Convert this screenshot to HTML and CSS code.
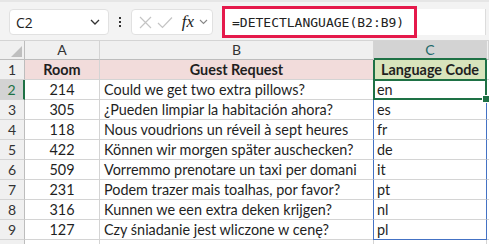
FILE: index.html
```html
<!DOCTYPE html>
<html lang="en">
<head>
  <meta charset="UTF-8">
  <meta name="viewport" content="width=device-width, initial-scale=1">
  <title>DETECTLANGUAGE</title>
  <link rel="stylesheet" href="styles.css">
</head>
<body>
<div class="topbar">
  <div class="namebox">
    <span>C2</span>
    <svg width="10" height="6" viewBox="0 0 10 6"><path d="M1 1 L5 5 L9 1" fill="none" stroke="#333" stroke-width="1.3"/></svg>
  </div>
  <div class="kebab"><i></i><i></i><i></i></div>
  <div class="fxbox">
    <svg width="13" height="13" viewBox="0 0 13 13"><path d="M1 1 L12 12 M12 1 L1 12" stroke="#c4c4c4" stroke-width="1.2"/></svg>
    <svg width="16" height="13" viewBox="0 0 16 13"><path d="M1 7 L5.5 11.5 L15 1.5" fill="none" stroke="#c4c4c4" stroke-width="1.2"/></svg>
    <span class="fx">fx</span>
    <svg width="9" height="6" viewBox="0 0 9 6"><path d="M1 1 L4.5 4.5 L8 1" fill="none" stroke="#888" stroke-width="1.1"/></svg>
  </div>
  <div class="formula">
    <span class="formula-text">=DETECTLANGUAGE(B2:B9)</span>
    <div class="callout"></div>
  </div>
</div>

<div class="sheet">
  <div class="row col-heads">
    <div class="rh corner"><svg width="11" height="11" viewBox="0 0 11 11"><path d="M11 0 L11 11 L0 11 Z" fill="#bfbfbf"/></svg></div>
    <div class="ch">A</div>
    <div class="ch">B</div>
    <div class="ch sel">C</div>
    <div class="ch"></div>
  </div>

  <div class="row">
    <div class="rh">1</div>
    <div class="cell head-pink num">Room</div>
    <div class="cell head-pink num">Guest Request</div>
    <div class="cell head-green num">Language Code</div>
    <div class="cell"></div>
  </div>
  <div class="row">
    <div class="rh active">2</div>
    <div class="cell num">214</div>
    <div class="cell">Could we get two extra pillows?</div>
    <div class="cell code current">en</div>
    <div class="cell"></div>
  </div>
  <div class="row">
    <div class="rh">3</div>
    <div class="cell num">305</div>
    <div class="cell">¿Pueden limpiar la habitación ahora?</div>
    <div class="cell code">es</div>
    <div class="cell"></div>
  </div>
  <div class="row">
    <div class="rh">4</div>
    <div class="cell num">118</div>
    <div class="cell">Nous voudrions un réveil à sept heures</div>
    <div class="cell code">fr</div>
    <div class="cell"></div>
  </div>
  <div class="row">
    <div class="rh">5</div>
    <div class="cell num">422</div>
    <div class="cell">Können wir morgen später auschecken?</div>
    <div class="cell code">de</div>
    <div class="cell"></div>
  </div>
  <div class="row">
    <div class="rh">6</div>
    <div class="cell num">509</div>
    <div class="cell">Vorremmo prenotare un taxi per domani</div>
    <div class="cell code">it</div>
    <div class="cell"></div>
  </div>
  <div class="row">
    <div class="rh">7</div>
    <div class="cell num">231</div>
    <div class="cell">Podem trazer mais toalhas, por favor?</div>
    <div class="cell code">pt</div>
    <div class="cell"></div>
  </div>
  <div class="row">
    <div class="rh">8</div>
    <div class="cell num">316</div>
    <div class="cell">Kunnen we een extra deken krijgen?</div>
    <div class="cell code">nl</div>
    <div class="cell"></div>
  </div>
  <div class="row">
    <div class="rh">9</div>
    <div class="cell num">127</div>
    <div class="cell">Czy śniadanie jest wliczone w cenę?</div>
    <div class="cell code last">pl</div>
    <div class="cell"></div>
  </div>
  <div class="row">
    <div class="rh"></div>
    <div class="cell"></div>
    <div class="cell"></div>
    <div class="cell"></div>
    <div class="cell"></div>
  </div>
</div>
</body>
</html>
```

FILE: styles.css
```css
html, body {
  margin: 0;
  padding: 0;
  overflow: hidden;
  background: #ffffff;
  font-family: Lato, "Liberation Sans", sans-serif;
  color: #1f1f1f;
}

/* Formula bar strip */
.topbar {
  height: 41px;
  box-sizing: border-box;
  padding: 9px 3px 0 9px;
  display: flex;
  align-items: flex-start;
  background: #f3f3f3;
  border-top: 2px solid #e6e6e6;
  border-bottom: 1px solid #d4d4d4;
}

.namebox {
  width: 100px;
  height: 26px;
  box-sizing: border-box;
  margin-top: -2px;
  padding: 0 8px 0 6px;
  display: flex;
  align-items: center;
  justify-content: space-between;
  background: #fff;
  border: 1px solid #e1e1e1;
  border-radius: 4px;
  font-family: "Open Sans", sans-serif;
  font-size: 14px;
  color: #222;
}

.kebab {
  width: 22px;
  height: 26px;
  margin-top: -2px;
  display: flex;
  flex-direction: column;
  align-items: center;
  justify-content: center;
  gap: 2px;
}

.kebab i {
  width: 2px;
  height: 2px;
  background: #333;
}

.fxbox {
  width: 82px;
  height: 26px;
  box-sizing: border-box;
  margin-top: -2px;
  margin-right: 9px;
  padding: 0 4px 0 7px;
  display: flex;
  align-items: center;
  justify-content: space-between;
  background: #fff;
  border: 1px solid #e1e1e1;
  border-radius: 4px;
}

.fx {
  font-family: "Liberation Serif", serif;
  font-style: italic;
  font-size: 17px;
  color: #222;
  margin-left: 4px;
}

.formula {
  flex: 1;
  height: 26px;
  box-sizing: border-box;
  margin-top: -2px;
  padding-left: 10px;
  position: relative;
  display: flex;
  align-items: center;
  background: #fff;
  border-right: 1px solid #dcdcdc;
}

.formula-text {
  font-family: "DejaVu Sans Mono", monospace;
  font-size: 13px;
  color: #222;
}

/* red annotation drawn over the formula bar */
.callout {
  position: absolute;
  left: 0;
  top: -3px;
  width: 195px;
  height: 32px;
  box-sizing: border-box;
  border: 3px solid #e5194b;
}

/* Grid */
.row {
  display: grid;
  grid-template-columns: 25px 75px 274px 113px 1fr;
  height: 20px;
}

.row > div {
  box-sizing: border-box;
  border-right: 1px solid #d4d4d4;
  border-bottom: 1px solid #d4d4d4;
  white-space: nowrap;
  overflow: visible;
}

.col-heads {
  height: 19px;
  background: #f0f0f0;
}

.col-heads > div {
  border-bottom-color: #bdbdbd;
  font-size: 14px;
  color: #333;
  text-align: center;
  line-height: 18px;
}

.col-heads .corner {
  display: flex;
  align-items: flex-end;
  justify-content: flex-end;
  padding: 0 2px 2px 0;
}

.col-heads .sel {
  background: #d3d3d3;
  color: #1d6a6a;
  border-bottom: 2px solid #1e7145;
  line-height: 17px;
}

.rh {
  background: #f0f0f0;
  text-align: center;
  font-size: 14px;
  line-height: 19px;
  color: #333;
}

.row > .rh {
  border-right-color: #bdbdbd;
}

.row > .rh.active {
  background: #d3d3d3;
  color: #1e7145;
  border-right: 2px solid #1e7145;
}

.cell {
  font-size: 14.4px;
  line-height: 19px;
  padding-left: 4px;
}

.cell.num {
  text-align: center;
  padding-left: 0;
}

.head-pink {
  background: #f2dcdb;
  font-weight: bold;
}

.head-green {
  background: #d8e4bc;
  font-weight: bold;
}

.row > .head-green {
  border-left: 2px solid #1e7145;
  border-right: 2px solid #1e7145;
  margin-left: -1px;
  line-height: 19px;
}

.row > .code {
  border-left: 1px solid #4472c4;
  border-right: 1px solid #4472c4;
  margin-left: -1px;
  padding-left: 3px;
}

.row > .code.last {
  border-bottom-color: #4472c4;
}

.code.current {
  position: relative;
}

/* active cell frame and fill handle */
.code.current::after {
  content: "";
  position: absolute;
  left: -1px;
  top: -1px;
  right: -1px;
  bottom: -1px;
  border: 2px solid #1e7145;
}

.code.current::before {
  content: "";
  position: absolute;
  right: -4px;
  bottom: -4px;
  width: 6px;
  height: 6px;
  background: #1e7145;
  border: 1px solid #fff;
  z-index: 1;
}
```
